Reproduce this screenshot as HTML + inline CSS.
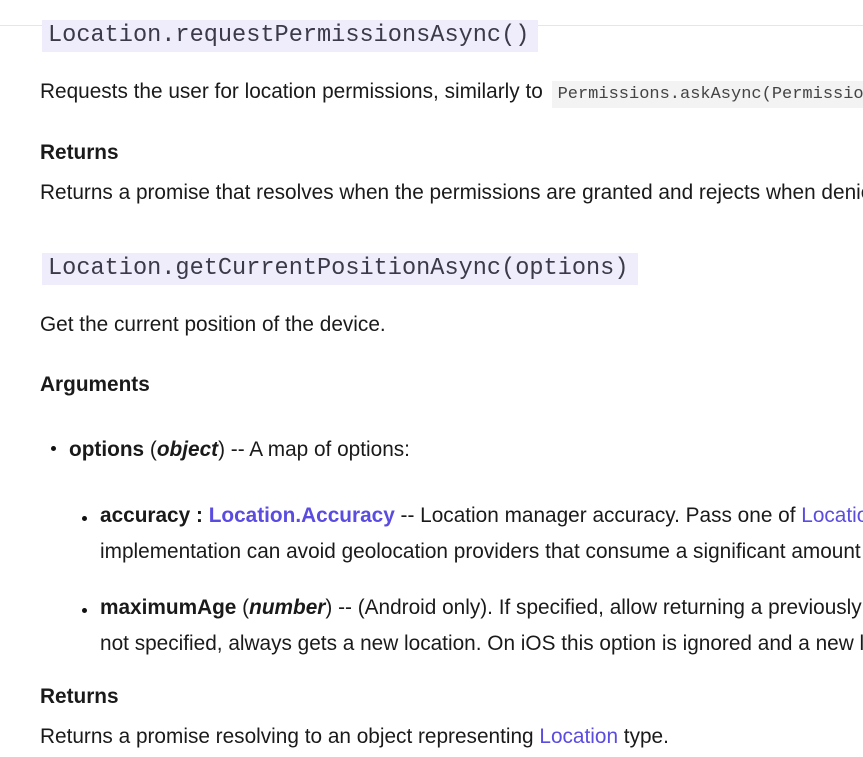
<!DOCTYPE html>
<html><head><style>
body{margin:0;width:863px;height:757px;overflow:hidden;background:#fff;font-family:"Liberation Sans",sans-serif;color:#1a1a1a;position:relative}
.w{position:absolute;left:0;top:0;width:863px;height:757px;overflow:hidden}
.t{position:absolute;white-space:nowrap;font-size:20.8px;line-height:24px}
.h{font-weight:bold;font-size:20.8px}
.cb{position:absolute;background:#efedfb;font-family:"Liberation Mono",monospace;font-size:23.6px;color:#3a3a4a;line-height:32px;padding:0 6px;white-space:nowrap}
.ic{background:#f3f3f3;font-family:"Liberation Mono",monospace;font-size:17px;color:#444;padding:4px 6px;margin-left:3px}
a{color:#5b4ce0;text-decoration:none}
.dot{position:absolute;width:5px;height:5px;border-radius:50%;background:#111}
</style></head><body><div class="w">
<div style="position:absolute;left:0;top:25px;width:863px;height:1px;background:#e6e6e6"></div>
<div class="cb" style="left:42px;top:20px;width:484px">Location.requestPermissionsAsync()</div>
<div class="t" style="left:40px;top:80px">Requests the user for location permissions, similarly to <span class="ic">Permissions.askAsync(Permissions.LOCATION)</span></div>
<div class="t h" style="left:40px;top:141px">Returns</div>
<div class="t" style="left:40px;top:181px">Returns a promise that resolves when the permissions are granted and rejects when denied.</div>
<div class="cb" style="left:42px;top:253px;width:584px">Location.getCurrentPositionAsync(options)</div>
<div class="t" style="left:40px;top:313px">Get the current position of the device.</div>
<div class="t h" style="left:40px;top:373px">Arguments</div>
<div class="dot" style="left:51px;top:446px"></div>
<div class="t" style="left:69px;top:438px"><b>options</b> (<b><i>object</i></b>) -- A map of options:</div>
<div class="dot" style="left:82px;top:516px"></div>
<div class="t" style="left:100px;top:504px"><b>accuracy : <a>Location.Accuracy</a></b> -- Location manager accuracy. Pass one of <a>Location.Accuracy</a> enum values.</div>
<div class="t" style="left:100px;top:540px">implementation can avoid geolocation providers that consume a significant amount of power</div>
<div class="dot" style="left:82px;top:608px"></div>
<div class="t" style="left:100px;top:596px"><b>maximumAge</b> (<b><i>number</i></b>) -- (Android only). If specified, allow returning a previously cached</div>
<div class="t" style="left:100px;top:632px">not specified, always gets a new location. On iOS this option is ignored and a new location</div>
<div class="t h" style="left:40px;top:685px">Returns</div>
<div class="t" style="left:40px;top:725px">Returns a promise resolving to an object representing <a>Location</a> type.</div>
</div></body></html>
